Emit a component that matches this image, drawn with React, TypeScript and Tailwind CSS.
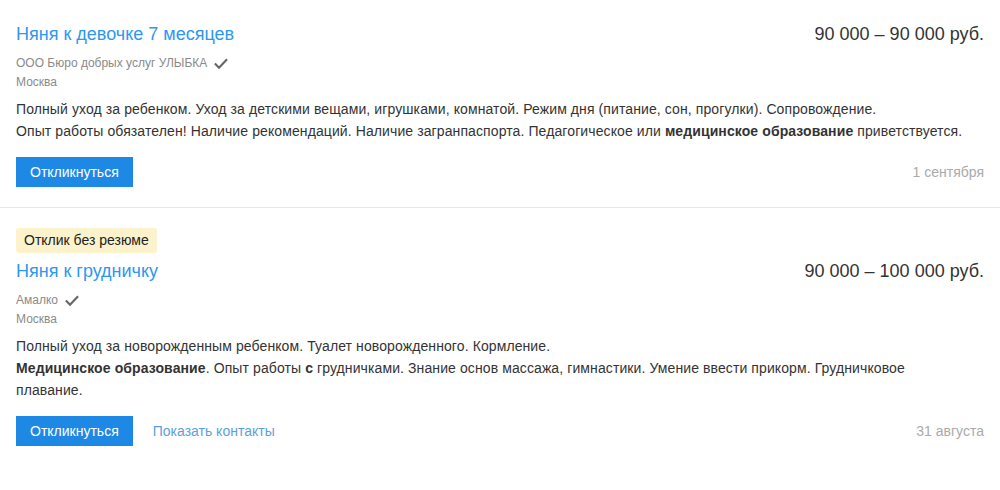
const font = { fontFamily: '"Liberation Sans", Arial, sans-serif' };

function Check() {
  return (
    <svg width="16" height="16" viewBox="0 0 24 24" fill="none" stroke="#666" strokeWidth="3.2" strokeLinecap="square" className="ml-1.5 shrink-0">
      <path d="M4 12.5l5 5L20 6" />
    </svg>
  );
}

type Vacancy = {
  badge?: string;
  title: string;
  salary: string;
  company: string;
  city: string;
  date: string;
  showContacts?: boolean;
  body: React.ReactNode;
};

const vacancies: Vacancy[] = [
  {
    title: "Няня к девочке 7 месяцев",
    salary: "90 000 – 90 000 руб.",
    company: "ООО Бюро добрых услуг УЛЫБКА",
    city: "Москва",
    date: "1 сентября",
    body: (
      <>
        Полный уход за ребенком. Уход за детскими вещами, игрушками, комнатой. Режим дня (питание, сон, прогулки). Сопровождение.
        <br />
        Опыт работы обязателен! Наличие рекомендаций. Наличие загранпаспорта. Педагогическое или <b>медицинское образование</b> приветствуется.
      </>
    ),
  },
  {
    badge: "Отклик без резюме",
    title: "Няня к грудничку",
    salary: "90 000 – 100 000 руб.",
    company: "Амалко",
    city: "Москва",
    date: "31 августа",
    showContacts: true,
    body: (
      <>
        Полный уход за новорожденным ребенком. Туалет новорожденного. Кормление.
        <br />
        <b>Медицинское образование</b>. Опыт работы <b>с</b> грудничками. Знание основ массажа, гимнастики. Умение ввести прикорм. Грудничковое плавание.
      </>
    ),
  },
];

function VacancyCard({ v, last }: { v: Vacancy; last: boolean }) {
  return (
    <div className={`px-4 pb-5 ${v.badge ? "pt-5" : "pt-[22px]"} ${last ? "" : "border-b border-[#e6e6e6]"}`}>
      {v.badge && (
        <div className="mb-1.5 inline-block rounded-[3px] bg-[#fcf3cd] px-2 text-[14px] leading-[25px] text-[#222]">
          {v.badge}
        </div>
      )}
      <div className="flex items-center justify-between">
        <a href="#" className="text-[18px] leading-6 text-[#2d97f2]">
          {v.title}
        </a>
        <div className="text-[18px] leading-6 text-[#333]">{v.salary}</div>
      </div>
      <div className="mt-2 flex items-center text-[12px] leading-[19px] text-[#8a8a8a]">
        {v.company}
        <Check />
      </div>
      <div className="text-[12px] leading-[19px] text-[#8a8a8a]">{v.city}</div>
      <p className="mt-1.5 max-w-[952px] text-[14px] leading-[22px] tracking-[0.1px] text-[#333]">{v.body}</p>
      <div className="mt-[15px] flex items-center justify-between">
        <div className="flex items-center gap-5">
          <button className="h-[30px] bg-[#1e88e5] px-[14px] text-[14px] text-white">Откликнуться</button>
          {v.showContacts && (
            <a href="#" className="text-[14px] text-[#5c9fda]">
              Показать контакты
            </a>
          )}
        </div>
        <div className="text-[14px] text-[#aaa]">{v.date}</div>
      </div>
    </div>
  );
}

export default function App() {
  return (
    <div className="w-[1000px] bg-white" style={font}>
      {vacancies.map((v, i) => (
        <VacancyCard key={i} v={v} last={i === vacancies.length - 1} />
      ))}
    </div>
  );
}
